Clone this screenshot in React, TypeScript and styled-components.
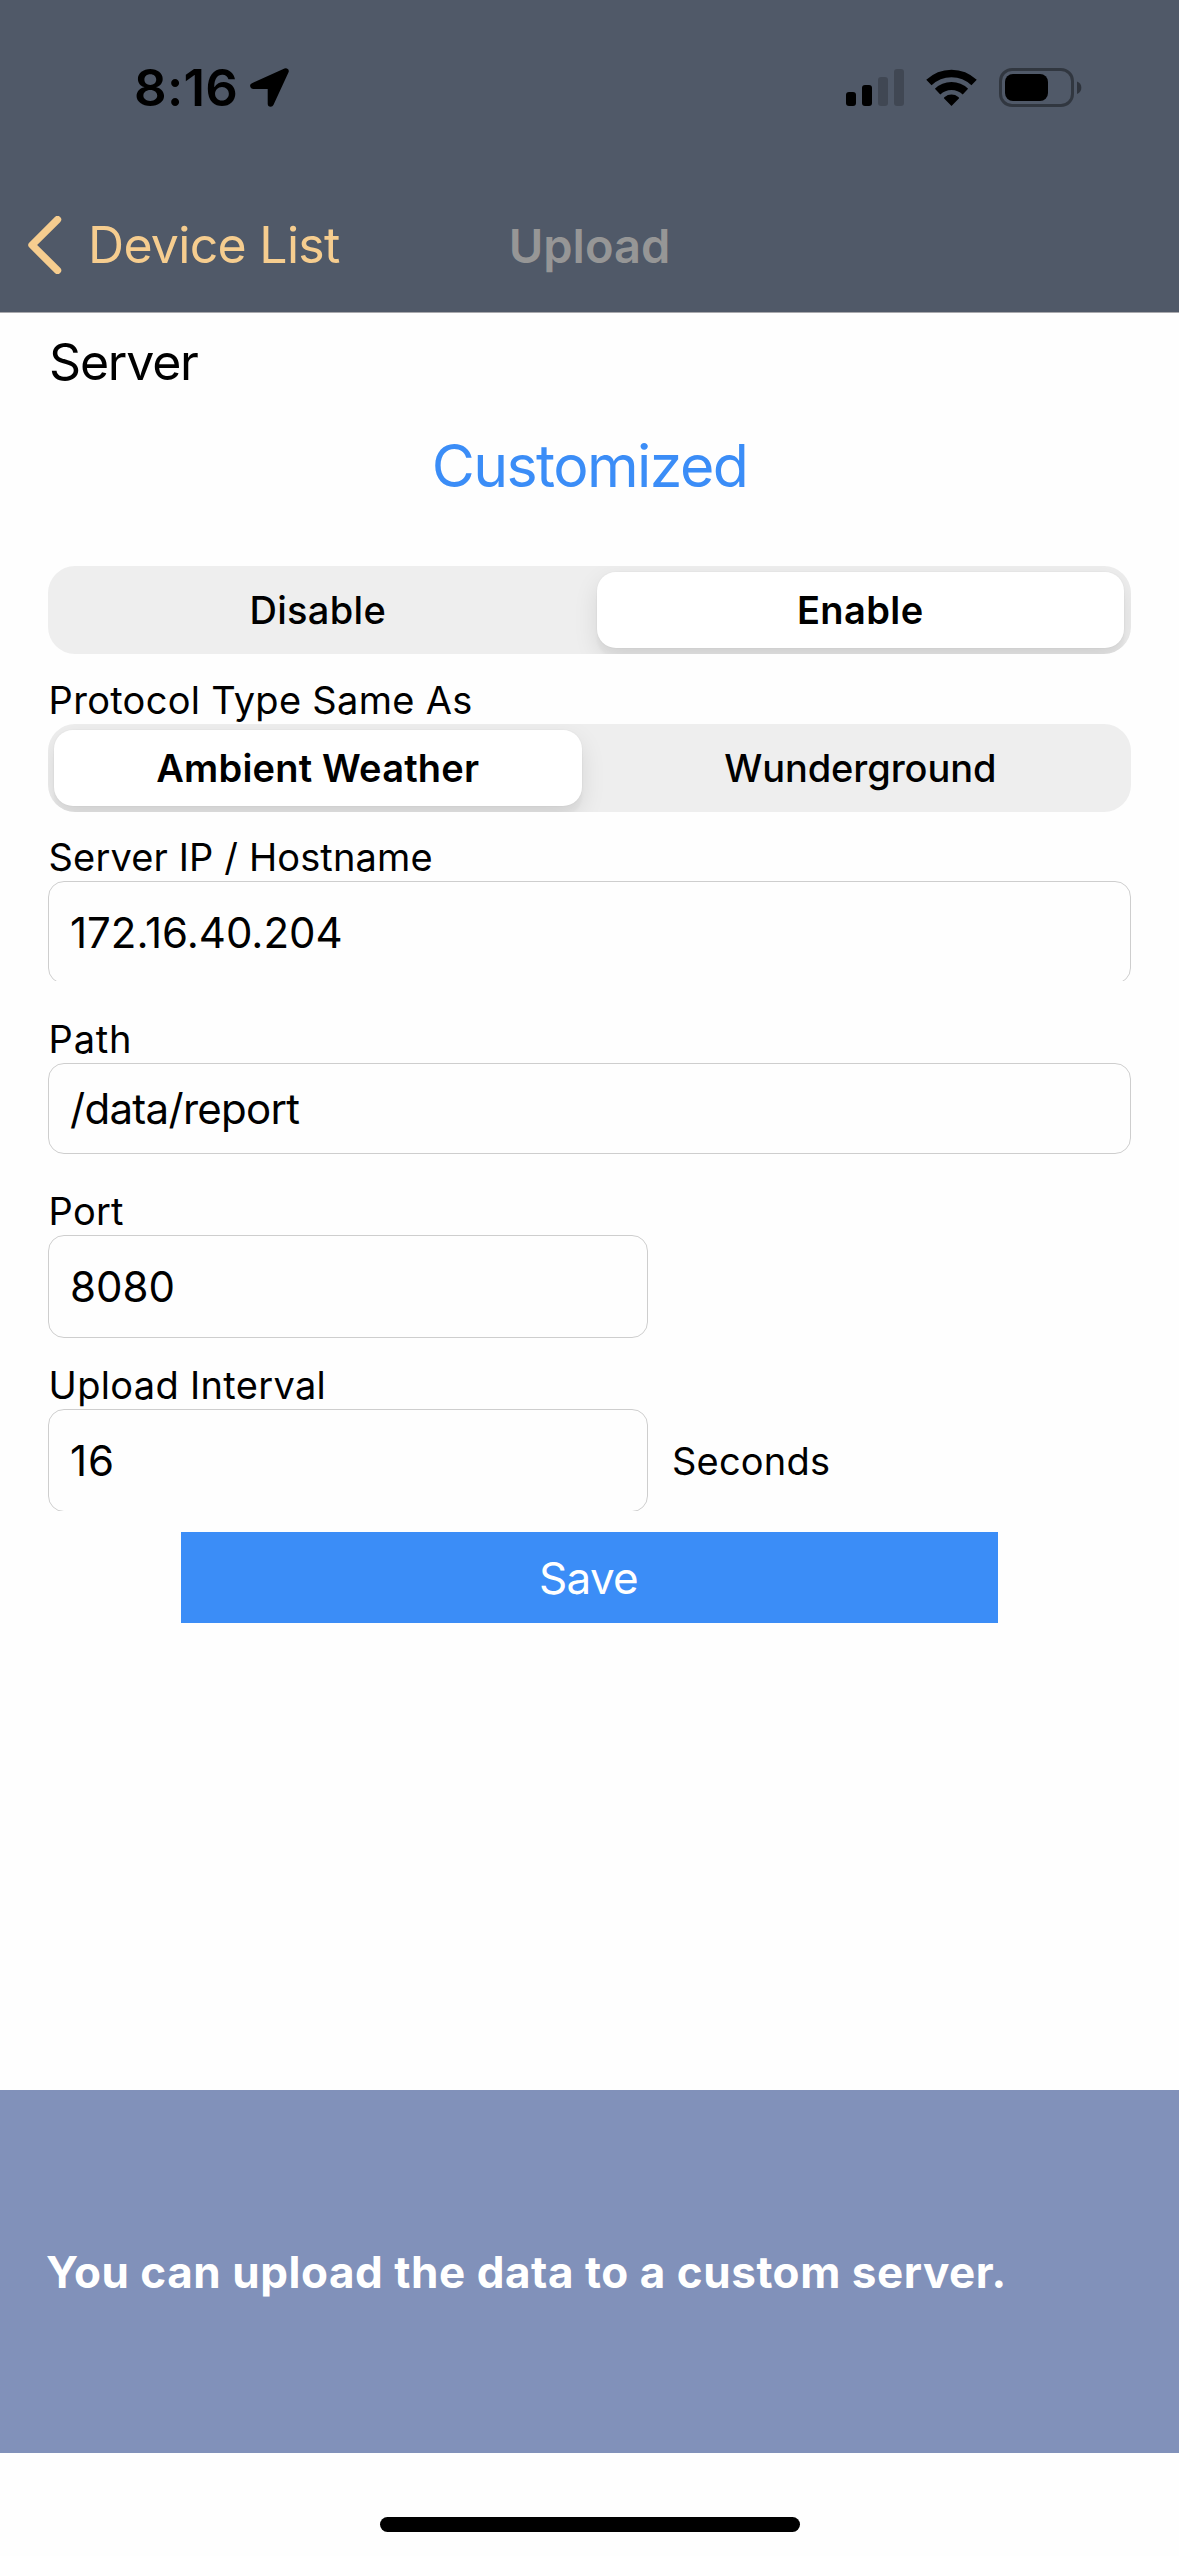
import React, { useState } from 'react';
import styled, { createGlobalStyle } from 'styled-components';

const GlobalStyle = createGlobalStyle`
  *, *::before, *::after { box-sizing: border-box; }
  html, body { margin: 0; padding: 0; background: #fefefe; }
  body, button, input { font-family: Inter, "Liberation Sans", sans-serif; color: #000; }
`;

const Screen = styled.div`
  width: 1179px;
  height: 2556px;
  display: flex;
  flex-direction: column;
  background: #fefefe;
  overflow: hidden;
`;

const Header = styled.header`
  flex: none;
  height: 313px;
  background: #505968;
  border-bottom: 1px solid #a9a9ad;
`;

const StatusBar = styled.div`
  height: 175px;
  display: flex;
  align-items: center;
  justify-content: space-between;
  padding: 0 97px 0 134px;
`;

const StatusGroup = styled.div<{ $gap?: number }>`
  display: flex;
  align-items: center;
  gap: ${(p) => p.$gap ?? 0}px;

  svg { display: block; }
`;

const Time = styled.span`
  width: 116px;
  font-size: 51px;
  font-weight: 600;
  line-height: 60px;
  letter-spacing: 0.3px;
`;

const NavBar = styled.nav`
  height: 137px;
  padding-top: 3px;
  display: grid;
  grid-template-columns: 1fr auto 1fr;
  align-items: center;
`;

const BackButton = styled.button`
  display: flex;
  align-items: center;
  gap: 26px;
  padding: 0 0 0 28px;
  border: 0;
  background: none;
  color: #f6cd8f;
  font-size: 50px;
  line-height: 60px;
  letter-spacing: -0.7px;

  svg { display: block; }
`;

const Title = styled.h1`
  margin: 2px 0 0;
  color: #969696;
  font-size: 47px;
  font-weight: 600;
  line-height: 60px;
`;

const Form = styled.main`
  flex: 1;
  display: flex;
  flex-direction: column;
  padding: 0 48px;
`;

const SectionTitle = styled.h2`
  margin: 0;
  padding-left: 1px;
  font-size: 50px;
  font-weight: 400;
  line-height: 99px;
  letter-spacing: -1.2px;
`;

const ServerPicker = styled.button`
  align-self: center;
  margin-bottom: 46px;
  padding: 0;
  border: 0;
  background: none;
  color: #3b8df7;
  font-size: 59px;
  line-height: 108px;
  letter-spacing: -1.6px;
`;

const Segmented = styled.div`
  flex: none;
  height: 88px;
  display: grid;
  grid-template-columns: 1fr 1fr;
  gap: 15px;
  padding: 6px 7px 6px 6px;
  border-radius: 27px;
  background: #eeeeee;
  overflow: hidden;
`;

const Segment = styled.button<{ $active: boolean; $spacing: number }>`
  padding: 0 0 1px;
  border: 0;
  border-radius: 19px;
  background: ${(p) => (p.$active ? '#fff' : 'transparent')};
  box-shadow: ${(p) =>
    p.$active
      ? '0 0 0 1px rgba(0, 0, 0, 0.015), 0 9px 24px rgba(0, 0, 0, 0.1), 0 9px 3px rgba(0, 0, 0, 0.03)'
      : 'none'};
  font-size: 38px;
  font-weight: ${(p) => (p.$active ? 600 : 500)};
  letter-spacing: ${(p) => p.$spacing}px;
`;

const Label = styled.label<{ $top: number; $spacing: number }>`
  margin-top: ${(p) => p.$top}px;
  padding-left: 0.6px;
  font-size: 38px;
  line-height: 48px;
  letter-spacing: ${(p) => p.$spacing}px;
`;

/* Shorter than the input it holds, so the lower border can be cut off. */
const FieldClip = styled.div<{ $height: number; $width?: number }>`
  flex: none;
  width: ${(p) => p.$width ?? 1083}px;
  height: ${(p) => p.$height}px;
  overflow: hidden;
`;

const Field = styled.input<{ $height: number; $spacing?: number }>`
  display: block;
  width: 100%;
  height: ${(p) => p.$height}px;
  padding: 0 21px;
  border: 1px solid #cecece;
  border-radius: 16px;
  outline: 0;
  background: #fefefe;
  font-size: 42px;
  letter-spacing: ${(p) => p.$spacing ?? 0}px;
`;

const FieldRow = styled.div`
  display: flex;
  align-items: center;
  gap: 24px;
`;

const Unit = styled.span`
  font-size: 38px;
  line-height: 48px;
  letter-spacing: 0.2px;
  padding-top: 2px;
`;

const SaveButton = styled.button`
  align-self: center;
  width: 817px;
  height: 91px;
  margin-top: 21px;
  padding: 0 2px 0 0;
  border: 0;
  background: #3b8df7;
  color: #fff;
  font-size: 44px;
  letter-spacing: -0.65px;
`;

const Banner = styled.aside`
  flex: none;
  height: 363px;
  display: flex;
  align-items: center;
  padding: 0 46px;
  background: #8191ba;
  color: #fff;
  font-size: 44px;
  font-weight: 700;
  letter-spacing: 0.55px;
  white-space: nowrap;
`;

const HomeArea = styled.footer`
  flex: none;
  height: 103px;
  display: flex;
  justify-content: center;
  padding-top: 64px;
`;

const HomeIndicator = styled.div`
  width: 420px;
  height: 15px;
  border-radius: 8px;
  background: #000;
`;

const LocationIcon = () => (
  <svg width="39" height="39" viewBox="0 0 39 39">
    <path
      d="M35.7 3.3 3.2 17.9H20.7V35.8Z"
      stroke="#000"
      strokeWidth="6"
      strokeLinejoin="round"
    />
  </svg>
);

const SignalIcon = () => (
  <svg width="58" height="37" viewBox="0 0 58 37">
    <rect x="0" y="23" width="10" height="14" rx="3" />
    <rect x="16" y="16" width="10" height="21" rx="3" />
    <rect x="32" y="8" width="10" height="29" rx="3" opacity="0.2" />
    <rect x="48" y="0" width="10" height="37" rx="3" opacity="0.2" />
  </svg>
);

const WifiIcon = () => (
  <svg width="51" height="37" viewBox="0 0 51 37">
    <path d="M2.9 13.6a32.5 32.5 0 0 1 45.2 0" fill="none" stroke="#000" strokeWidth="7.6" />
    <path d="M11.6 22.6a20 20 0 0 1 27.8 0" fill="none" stroke="#000" strokeWidth="7.8" />
    <path d="M25.5 37 17.9 29.2q.1-.8.8-1.3a11 11 0 0 1 13.6 0q.7.5.8 1.3Z" />
  </svg>
);

const BatteryIcon = () => (
  <svg width="83" height="39" viewBox="0 0 83 39">
    <rect x="1.5" y="1.5" width="72" height="36" rx="11.5" fill="none" stroke="#000" strokeOpacity="0.38" strokeWidth="3" />
    <rect x="6" y="6" width="43" height="27" rx="8" />
    <path d="M78 13.5a6.6 6.6 0 0 1 0 12.4Z" opacity="0.42" />
  </svg>
);

const ChevronIcon = () => (
  <svg width="34" height="58" viewBox="0 0 34 58">
    <path
      d="M29.5 3.6 4 29 29.5 54.4"
      fill="none"
      stroke="#f6cd8f"
      strokeWidth="7.4"
      strokeLinecap="round"
      strokeLinejoin="round"
    />
  </svg>
);

type Option = { name: string; spacing: number };

const uploadOptions: Option[] = [
  { name: 'Disable', spacing: 0.3 },
  { name: 'Enable', spacing: 0.4 },
];

const protocolOptions: Option[] = [
  { name: 'Ambient Weather', spacing: 0.2 },
  { name: 'Wunderground', spacing: -0.1 },
];

function SegmentedControl({ options, initial }: { options: Option[]; initial: number }) {
  const [selected, setSelected] = useState(initial);
  return (
    <Segmented>
      {options.map((o, i) => (
        <Segment key={o.name} $active={i === selected} $spacing={o.spacing} onClick={() => setSelected(i)}>
          {o.name}
        </Segment>
      ))}
    </Segmented>
  );
}

export default function App() {
  return (
    <>
      <GlobalStyle />
      <Screen>
        <Header>
          <StatusBar>
            <StatusGroup>
              <Time>8:16</Time>
              <LocationIcon />
            </StatusGroup>
            <StatusGroup $gap={22}>
              <SignalIcon />
              <WifiIcon />
              <BatteryIcon />
            </StatusGroup>
          </StatusBar>
          <NavBar>
            <BackButton>
              <ChevronIcon />
              Device List
            </BackButton>
            <Title>Upload</Title>
          </NavBar>
        </Header>

        <Form>
          <SectionTitle>Server</SectionTitle>
          <ServerPicker>Customized</ServerPicker>
          <SegmentedControl options={uploadOptions} initial={1} />

          <Label as="div" $top={22} $spacing={0.3}>Protocol Type Same As</Label>
          <SegmentedControl options={protocolOptions} initial={0} />

          <Label htmlFor="host" $top={21} $spacing={0.13}>Server IP / Hostname</Label>
          <FieldClip $height={100}>
            <Field id="host" $height={103} defaultValue="172.16.40.204" />
          </FieldClip>

          <Label htmlFor="path" $top={34} $spacing={0.8}>Path</Label>
          <FieldClip $height={91}>
            <Field id="path" $height={91} $spacing={-0.7} defaultValue="/data/report" />
          </FieldClip>

          <Label htmlFor="port" $top={33} $spacing={0.25}>Port</Label>
          <FieldClip $height={103} $width={600}>
            <Field id="port" $height={103} defaultValue="8080" />
          </FieldClip>

          <Label htmlFor="interval" $top={23} $spacing={0.32}>Upload Interval</Label>
          <FieldRow>
            <FieldClip $height={102} $width={600}>
              <Field id="interval" $height={103} $spacing={1} defaultValue="16" />
            </FieldClip>
            <Unit>Seconds</Unit>
          </FieldRow>

          <SaveButton>Save</SaveButton>
        </Form>

        <Banner>You can upload the data to a custom server.</Banner>
        <HomeArea>
          <HomeIndicator />
        </HomeArea>
      </Screen>
    </>
  );
}
